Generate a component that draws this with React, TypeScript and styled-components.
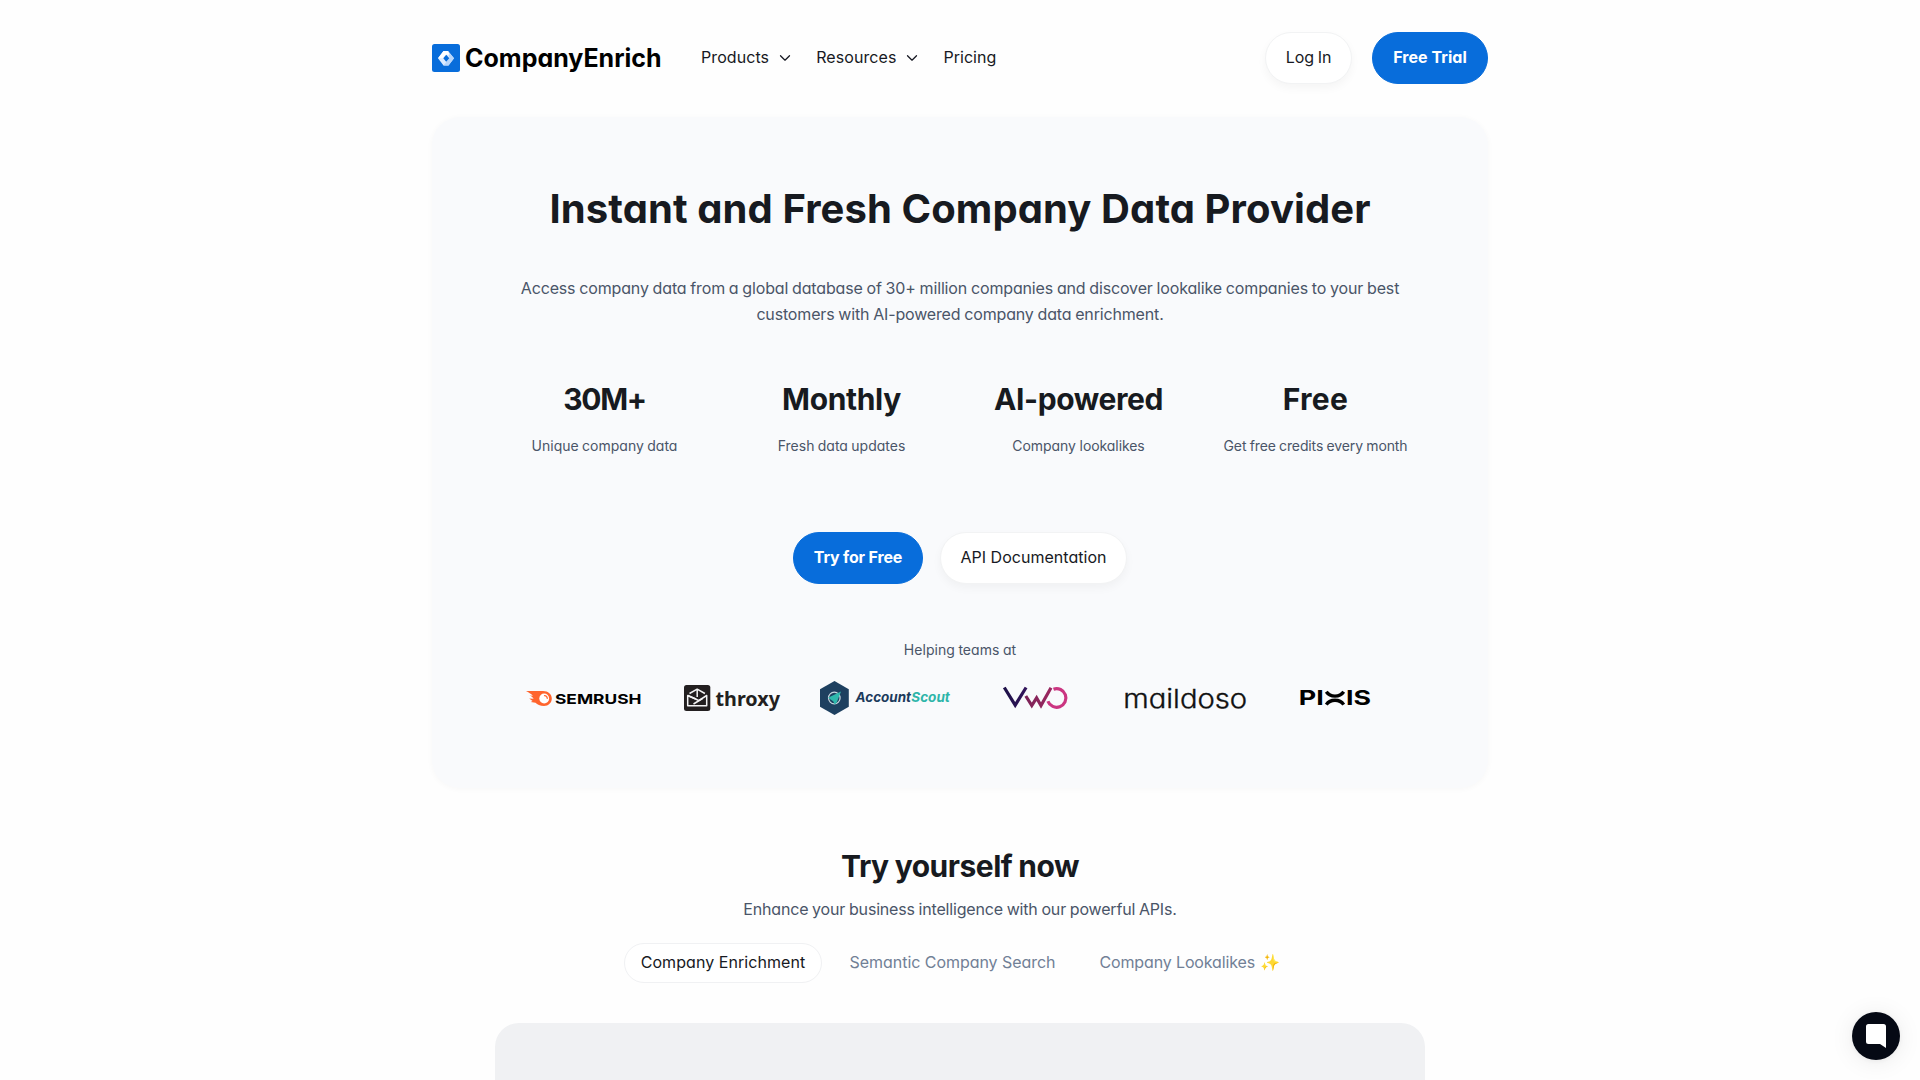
import React from "react";
import styled, { createGlobalStyle } from "styled-components";

const GlobalStyle = createGlobalStyle`
  * { box-sizing: border-box; margin: 0; padding: 0; }
  html { overflow: hidden; }
  body {
    background: #fefefe;
    color: #171923;
    font-family: Inter, "Liberation Sans", sans-serif;
    font-feature-settings: "cv11";
    font-size: 16px;
    line-height: 26px;
  }
`;

const Page = styled.div`
  width: 1056px;
  height: 1080px;
  margin: 0 auto;
  display: flex;
  flex-direction: column;
`;

/* Tracking and word gaps for one run of text */
const Run = styled.span<{ $ls?: number; $ws?: number }>`
  letter-spacing: ${(p) => p.$ls ?? 0}px;
  word-spacing: ${(p) => p.$ws ?? 0}px;
  white-space: nowrap;
`;

const Header = styled.header`
  height: 117px;
  padding-bottom: 1px;
  flex: none;
  display: flex;
  align-items: center;
`;

const Brand = styled.a`
  display: flex;
  align-items: center;
  width: 269px;
  gap: 5px;
  color: #000;
  font-size: 25px;
  line-height: 28px;
  font-weight: 700;
`;

const Nav = styled.nav`
  display: flex;
  gap: 25px;
  flex: 1;
  padding-bottom: 2px;
`;

const NavItem = styled.a`
  display: flex;
  align-items: center;
  gap: 10px;
`;

const Actions = styled.div<{ $gap: number }>`
  display: flex;
  justify-content: center;
  gap: ${(p) => p.$gap}px;
`;

const Button = styled.button<{ $primary?: boolean; $width: number }>`
  width: ${(p) => p.$width}px;
  height: 52px;
  padding-bottom: 2px;
  border-radius: 26px;
  border: 1px solid ${(p) => (p.$primary ? "#086ddb" : "#f2f3f4")};
  background: ${(p) => (p.$primary ? "#086ddb" : "#fff")};
  color: ${(p) => (p.$primary ? "#fff" : "#171923")};
  font: inherit;
  font-weight: ${(p) => (p.$primary ? 700 : 400)};
  box-shadow: ${(p) => (p.$primary ? "none" : "0 4px 10px rgba(0, 0, 0, 0.04)")};
`;

const Hero = styled.section`
  height: 671px;
  flex: none;
  padding-top: 68px;
  border-radius: 28px;
  background: #f9fafc;
  box-shadow: 0 1px 6px rgba(0, 0, 0, 0.03);
  display: flex;
  flex-direction: column;
  align-items: center;
`;

const Title = styled.h1`
  font-size: 40px;
  line-height: 48px;
  font-weight: 700;
  color: #171a20;
`;

const Lead = styled.p`
  margin-top: 42px;
  color: #4a5568;
  text-align: center;
`;

const Stats = styled.div`
  margin-top: 54px;
  width: 948px;
  display: grid;
  grid-template-columns: repeat(4, 1fr);
`;

const Stat = styled.div`
  display: flex;
  flex-direction: column;
  align-items: center;
  gap: 19px;
`;

const Heading = styled.h2`
  font-size: 30px;
  line-height: 36px;
  font-weight: 700;
  color: #171a20;
`;

const Small = styled.p`
  font-size: 14px;
  line-height: 20px;
  color: #4a5568;
`;

const HeroActions = styled.div`
  margin: 76px 0 56px;
`;

const Logos = styled.div`
  margin-top: 16px;
  width: 904px;
  height: 44px;
  display: grid;
  grid-template-columns: repeat(6, 1fr);
  justify-items: center;
  align-items: center;
`;

const Demo = styled.section`
  padding-top: 60px;
  display: flex;
  flex-direction: column;
  align-items: center;
`;

const DemoText = styled.p`
  margin-top: 12px;
  color: #4a5568;
`;

const Tabs = styled.div`
  margin-top: 21px;
  width: 672px;
  display: flex;
`;

const Tab = styled.button<{ $active?: boolean; $width: number }>`
  width: ${(p) => p.$width}px;
  height: 40px;
  padding-bottom: 2px;
  border-radius: 20px;
  border: 1px solid ${(p) => (p.$active ? "#f0f1f3" : "transparent")};
  background: ${(p) => (p.$active ? "#fff" : "transparent")};
  color: ${(p) => (p.$active ? "#171923" : "#718096")};
  font: inherit;
  white-space: nowrap;
`;

const Panel = styled.div`
  margin-top: 40px;
  width: 930px;
  height: 57px;
  border-radius: 24px 24px 0 0;
  background: #f0f1f3;
`;

const ChatButton = styled.button`
  position: fixed;
  right: 20px;
  bottom: 20px;
  width: 48px;
  height: 48px;
  border: 0;
  border-radius: 50%;
  background: #050914;
  box-shadow: 0 1px 6px rgba(0, 0, 0, 0.06), 0 2px 24px rgba(0, 0, 0, 0.08);
  display: grid;
  place-items: center;
`;

const Svg = styled.svg`
  display: block;
  overflow: visible;
  font-family: Inter, "Liberation Sans", sans-serif;
`;

const Chevron = () => (
  <Svg width="12" height="12" viewBox="0 0 12 12" fill="none" stroke="#171923" strokeWidth="1.25" strokeLinecap="round" strokeLinejoin="round">
    <path d="M1.500 4.700 6 9.200l4.500-4.500" />
  </Svg>
);

const BrandMark = () => (
  <Svg width="28" height="28" viewBox="0 0 28 28">
    <rect width="28" height="28" rx="2.500" fill="#086ddb" />
    <path d="M11.500 7h4.500l6 7.200-5.500 7.300h-5L6 14.200z" fill="#dcebff" />
    <path d="M16 7l6 7.200-5.500 7.300h-5l6-7.300z" fill="#b8d6fb" />
    <path d="M11.500 7H16l1.500 3.500L14 11l-3 3.200H6z" fill="#fff" />
    <path d="M14.200 10.700l3.100 3.500-3.100 3.500-2.900-3.500z" fill="#086ddb" />
  </Svg>
);

const Semrush = () => (
  <Svg width="115" height="20" viewBox="526 688 115 20">
    <path d="M526 691h17c5.200 0 8.800 3.200 8.800 7.500s-3.400 7.500-7.800 7.500c-4 0-6.700-1.300-8.500-3.200l-4.700-.9 1.800-1-3.400-2.400 4.400.2c-.8-1.600-2.400-2.500-4-3.200l3.300.2c-2-1.900-4.200-3.300-6.900-4.700z" fill="#ff642d" />
    <circle cx="544.200" cy="698.500" r="4.900" fill="#fff" />
    <path d="M544.500 695.600c1.700.1 2.700 1.100 2.800 2.800" fill="none" stroke="#ff642d" strokeWidth="1.200" strokeLinecap="round" />
    <text x="555" y="703.500" fontSize="13.500" fontWeight="700" textLength="86.500" lengthAdjust="spacingAndGlyphs">SEMRUSH</text>
  </Svg>
);

const Throxy = () => (
  <Svg width="96" height="28" viewBox="686 684 96 28" fill="#231f20">
    <rect x="684" y="685" width="26.300" height="26" rx="2.500" />
    <g fill="none" stroke="#f4f4f5" strokeWidth="1.500" strokeLinejoin="round">
      <path d="M687.700 695.500v10.300h19V695.500l-8 5.200-3 -1.700z" />
      <path d="M687.700 695.500l8 3.500M689.500 693.500l7.700-4.300 7.700 4.300M697.200 690v7M693.500 704l9-5.500" />
    </g>
    <text x="715.500" y="706" fontSize="20" fontWeight="700" fontFamily="'Noto Sans', sans-serif" textLength="64.500" lengthAdjust="spacingAndGlyphs">throxy</text>
  </Svg>
);

const AccountScout = () => (
  <Svg width="130" height="34" viewBox="820 681 130 34">
    <path d="M834.500 681l14.300 8.300v17.400l-14.300 8.300-14.500-8.300v-17.400z" fill="#1e4060" />
    <circle cx="834.300" cy="698" r="5.800" fill="none" stroke="#c9d6df" strokeWidth="1.200" />
    <path d="M841 691.500l-4.500 11.500-1.800 1.500-1.500-3.200-5.200-3.500z" fill="#2fb8ac" />
    <text y="701.700" fontSize="13.500" fontWeight="700" fontStyle="italic">
      <tspan x="855.500" fill="#1c3a5c" textLength="55.500" lengthAdjust="spacingAndGlyphs">Account</tspan>
      <tspan x="911.300" fill="#2eb5a9" textLength="38.500" lengthAdjust="spacingAndGlyphs">Scout</tspan>
    </text>
  </Svg>
);

const Vwo = () => (
  <Svg width="64" height="22" viewBox="1003 687.500 64 22" fill="none" strokeWidth="3.200">
    <defs>
      <linearGradient id="vwoV" x1="0" x2="1"><stop offset="0" stopColor="#1d1047" /><stop offset="1" stopColor="#33155c" /></linearGradient>
      <linearGradient id="vwoW" x1="0" x2="1"><stop offset="0" stopColor="#7b2257" /><stop offset="1" stopColor="#9c2860" /></linearGradient>
    </defs>
    <path d="M1004.300 688l10.900 17.700 10.900-17.700" stroke="url(#vwoV)" />
    <path d="M1025.800 696.500l6 9.500 4.800-7.600 4.400 7.600 10-17.800" stroke="url(#vwoW)" />
    <path d="M1053.500 689.700a9.300 9.300 0 1 1-5.600 12" stroke="#cb3581" />
  </Svg>
);

const Maildoso = () => (
  <Svg width="122" height="24" viewBox="1124.500 686 122 24" fill="#111">
    <text x="1122.700" y="707.500" fontSize="26" fontWeight="300" stroke="#111" strokeWidth=".35" textLength="124" lengthAdjust="spacingAndGlyphs">maildoso</text>
  </Svg>
);

const Pixis = () => (
  <Svg width="70" height="18" viewBox="1302 689.500 70 18" fontSize="20" fontWeight="700">
    <text x="1298.800" y="705.700" textLength="25" lengthAdjust="spacingAndGlyphs">PI</text>
    <path d="M1326.300 692.300c4 5.800 13.400 5.800 17.400 0M1326.300 705.100c4-5.800 13.400-5.800 17.400 0" fill="none" stroke="#000" strokeWidth="3.400" />
    <text x="1346" y="705.700" textLength="25" lengthAdjust="spacingAndGlyphs">IS</text>
  </Svg>
);

const stats = [
  { value: "30M+", ls: -1.4, label: "Unique company data", lls: 0, lws: -0.5 },
  { value: "Monthly", ls: -0.35, label: "Fresh data updates", lls: 0, lws: -0.6 },
  { value: "AI-powered", ls: -0.4, label: "Company lookalikes", lls: -0.08, lws: 0 },
  { value: "Free", ls: 0.34, label: "Get free credits every month", lls: -0.12, lws: -0.5 },
];

export default function App() {
  return (
    <>
      <GlobalStyle />
      <Page>
        <Header>
          <Brand>
            <BrandMark />
            <Run $ls={0}>CompanyEnrich</Run>
          </Brand>
          <Nav>
            <NavItem><Run $ls={0.08}>Products</Run><Chevron /></NavItem>
            <NavItem><Run $ls={0.08}>Resources</Run><Chevron /></NavItem>
            <NavItem><Run $ls={0.03}>Pricing</Run></NavItem>
          </Nav>
          <Actions $gap={20}>
            <Button $width={87}><Run $ls={-0.15} $ws={-0.4}>Log In</Run></Button>
            <Button $primary $width={116}><Run $ls={0.05}>Free Trial</Run></Button>
          </Actions>
        </Header>

        <Hero>
          <Title><Run $ls={0.09}>Instant and Fresh Company Data Provider</Run></Title>
          <Lead>
            <Run $ls={-0.15} $ws={-0.5}>
              Access company data from a global database of 30+ million companies and discover lookalike companies to your best
            </Run>
            <br />
            <Run $ls={-0.16} $ws={-0.5}>customers with AI-powered company data enrichment.</Run>
          </Lead>
          <Stats>
            {stats.map((s) => (
              <Stat key={s.value}>
                <Heading as="h3"><Run $ls={s.ls}>{s.value}</Run></Heading>
                <Small><Run $ls={s.lls} $ws={s.lws}>{s.label}</Run></Small>
              </Stat>
            ))}
          </Stats>
          <HeroActions>
            <Actions $gap={17}>
              <Button $primary $width={130}><Run $ls={-0.1} $ws={-0.3}>Try for Free</Run></Button>
              <Button $width={187}><Run $ls={0.03}>API Documentation</Run></Button>
            </Actions>
          </HeroActions>
          <Small><Run $ls={0.03} $ws={-0.4}>Helping teams at</Run></Small>
          <Logos>
            <Semrush />
            <Throxy />
            <AccountScout />
            <Vwo />
            <Maildoso />
            <Pixis />
          </Logos>
        </Hero>

        <Demo>
          <Heading><Run $ls={-0.5} $ws={-0.6}>Try yourself now</Run></Heading>
          <DemoText>
            <Run $ls={-0.18} $ws={-0.5}>Enhance your business intelligence with our powerful APIs.</Run>
          </DemoText>
          <Tabs>
            <Tab $active $width={198}><Run $ls={0.06}>Company Enrichment</Run></Tab>
            <Tab $width={261}><Run $ls={-0.05}>Semantic Company Search</Run></Tab>
            <Tab $width={213}><Run $ls={-0.13}>Company Lookalikes</Run> ✨</Tab>
          </Tabs>
          <Panel />
        </Demo>
      </Page>
      <ChatButton aria-label="Open chat">
        <Svg width="20" height="24" viewBox="0 0 20 24" fill="#fff">
          <path d="M2.500 0h15A2.500 2.500 0 0 1 20 2.500V24l-6-4H2.500A2.500 2.500 0 0 1 0 17.500v-15A2.500 2.500 0 0 1 2.500 0z" />
        </Svg>
      </ChatButton>
    </>
  );
}
